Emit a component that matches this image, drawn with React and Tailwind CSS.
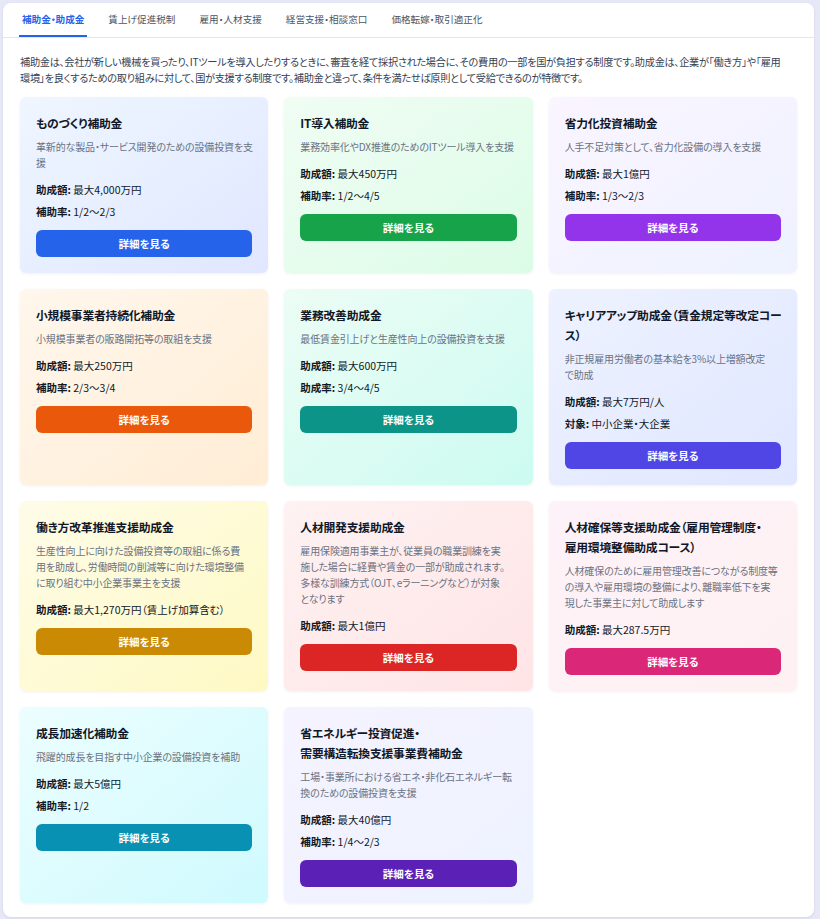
import React from "react";

const cards = [
  {
    title: "ものづくり補助金",
    desc: "革新的な製品・サービス開発のための設備投資を支\n援",
    rows: [["助成額", "最大4,000万円"], ["補助率", "1/2〜2/3"]],
    bg: "bg-linear-to-br from-[#eff6ff] to-[#e0e7ff]",
    btn: "bg-[#2563eb]",
  },
  {
    title: "IT導入補助金",
    desc: "業務効率化やDX推進のためのITツール導入を支援",
    rows: [["助成額", "最大450万円"], ["補助率", "1/2〜4/5"]],
    bg: "bg-linear-to-br from-[#f0fdf4] to-[#dcfce7]",
    btn: "bg-[#16a34a]",
  },
  {
    title: "省力化投資補助金",
    desc: "人手不足対策として、省力化設備の導入を支援",
    rows: [["助成額", "最大1億円"], ["補助率", "1/3〜2/3"]],
    bg: "bg-linear-to-br from-[#faf5ff] to-[#eef2ff]",
    btn: "bg-[#9333ea]",
  },
  {
    title: "小規模事業者持続化補助金",
    desc: "小規模事業者の販路開拓等の取組を支援",
    rows: [["助成額", "最大250万円"], ["補助率", "2/3〜3/4"]],
    bg: "bg-linear-to-br from-[#fff7ed] to-[#ffedd5]",
    btn: "bg-[#ea580c]",
  },
  {
    title: "業務改善助成金",
    desc: "最低賃金引上げと生産性向上の設備投資を支援",
    rows: [["助成額", "最大600万円"], ["助成率", "3/4〜4/5"]],
    bg: "bg-linear-to-br from-[#ecfdf5] to-[#ccfbf1]",
    btn: "bg-[#0d9488]",
  },
  {
    title: "キャリアアップ助成金（賃金規定等改定コー\nス）",
    desc: "非正規雇用労働者の基本給を3%以上増額改定\nで助成",
    rows: [["助成額", "最大7万円/人"], ["対象", "中小企業・大企業"]],
    bg: "bg-linear-to-br from-[#eef2ff] to-[#e0e7ff]",
    btn: "bg-[#4f46e5]",
  },
  {
    title: "働き方改革推進支援助成金",
    desc: "生産性向上に向けた設備投資等の取組に係る費\n用を助成し、労働時間の削減等に向けた環境整備\nに取り組む中小企業事業主を支援",
    rows: [["助成額", "最大1,270万円（賃上げ加算含む）"]],
    bg: "bg-linear-to-br from-[#fefce8] to-[#fef9c3]",
    btn: "bg-[#ca8a04]",
  },
  {
    title: "人材開発支援助成金",
    desc: "雇用保険適用事業主が、従業員の職業訓練を実\n施した場合に経費や賃金の一部が助成されます。\n多様な訓練方式（OJT、eラーニングなど）が対象\nとなります",
    rows: [["助成額", "最大1億円"]],
    bg: "bg-linear-to-br from-[#fef2f2] to-[#ffe4e6]",
    btn: "bg-[#dc2626]",
  },
  {
    title: "人材確保等支援助成金（雇用管理制度・\n雇用環境整備助成コース）",
    desc: "人材確保のために雇用管理改善につながる制度等\nの導入や雇用環境の整備により、離職率低下を実\n現した事業主に対して助成します",
    rows: [["助成額", "最大287.5万円"]],
    bg: "bg-linear-to-br from-[#fdf2f8] to-[#fff1f2]",
    btn: "bg-[#db2777]",
  },
  {
    title: "成長加速化補助金",
    desc: "飛躍的成長を目指す中小企業の設備投資を補助",
    rows: [["助成額", "最大5億円"], ["補助率", "1/2"]],
    bg: "bg-linear-to-br from-[#ecfeff] to-[#cffafe]",
    btn: "bg-[#0891b2]",
  },
  {
    title: "省エネルギー投資促進・\n需要構造転換支援事業費補助金",
    desc: "工場・事業所における省エネ・非化石エネルギー転\n換のための設備投資を支援",
    rows: [["助成額", "最大40億円"], ["補助率", "1/4〜2/3"]],
    bg: "bg-linear-to-br from-[#f5f3ff] to-[#eef2ff]",
    btn: "bg-[#5b21b6]",
  },
];

const tabs = ["補助金・助成金", "賃上げ促進税制", "雇用・人材支援", "経営支援・相談窓口", "価格転嫁・取引適正化"];

function Card({ c }) {
  return (
    <div className={`rounded-md p-4 shadow-[0_1px_3px_rgba(0,0,0,0.06)] ${c.bg}`}>
      <h3 className="whitespace-pre text-[11.8px] leading-[20px] font-bold tracking-[-0.2px] text-gray-900">
        {c.title}
      </h3>
      <p className="mt-[6px] whitespace-pre text-[10px] leading-[16px] tracking-[-0.15px] text-gray-500">
        {c.desc}
      </p>
      <div className="mt-[11px] flex flex-col gap-[6px] text-[10.5px] leading-[16px] text-gray-900">
        {c.rows.map(([k, v]) => (
          <div key={k}>
            <span className="font-bold">{k}:</span> {v}
          </div>
        ))}
      </div>
      <button
        className={`mt-[10px] flex h-[27px] w-full items-center justify-center rounded-md text-[10.5px] font-bold text-white ${c.btn}`}
      >
        詳細を見る
      </button>
    </div>
  );
}

export default function App() {
  return (
    <div
      className="min-h-screen bg-[#e7e8f7] pt-[3px] pb-[6px] pl-[3px] pr-[6px] [font-feature-settings:'palt']"
      style={{ fontFamily: '"Noto Sans CJK JP", "Noto Sans", sans-serif' }}
    >
      <div className="rounded-lg bg-white shadow-[0_1px_3px_rgba(0,0,0,0.08)]">
        <div className="flex h-[35px] items-stretch gap-[18px] border-b border-gray-200 px-[16px]">
          {tabs.map((t, i) => (
            <div
              key={t}
              className={`flex items-center px-[3px] text-[9.6px] ${
                i === 0
                  ? "border-b-2 border-[#2563eb] font-bold text-[#2563eb]"
                  : "border-b-2 border-transparent text-gray-600"
              }`}
            >
              {t}
            </div>
          ))}
        </div>
        <div className="px-[17px] pt-[16px] pb-[14px]">
          <p className="mb-[11px] whitespace-pre text-[10.2px] leading-[16px] tracking-[-0.3px] text-gray-700">
            {"補助金は、会社が新しい機械を買ったり、ITツールを導入したりするときに、審査を経て採択された場合に、その費用の一部を国が負担する制度です。助成金は、企業が「働き方」や「雇用\n環境」を良くするための取り組みに対して、国が支援する制度です。補助金と違って、条件を満たせば原則として受給できるのが特徴です。"}
          </p>
          <div className="grid grid-cols-3 gap-4">
            {cards.map((c, i) => (
              <Card key={i} c={c} />
            ))}
          </div>
        </div>
      </div>
    </div>
  );
}
